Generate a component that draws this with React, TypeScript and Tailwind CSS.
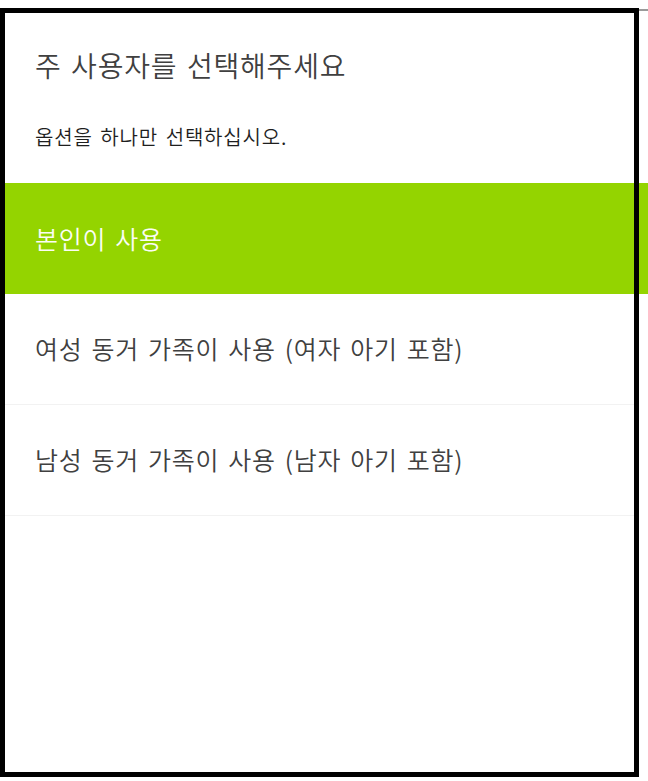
import React from "react";

const font = { fontFamily: '"Noto Sans CJK KR", "Noto Sans", sans-serif' };

export default function App() {
  const items = [
    { label: "본인이 사용", selected: true },
    { label: "여성 동거 가족이 사용 (여자 아기 포함)", selected: false },
    { label: "남성 동거 가족이 사용 (남자 아기 포함)", selected: false },
  ];
  return (
    <div className="w-[648px] h-[781px] bg-white flex" style={font}>
      <div className="mt-[8px] w-[639px] h-[769px] border-[5px] border-black bg-white flex flex-col">
        <div className="pt-[33px] pb-[33px] px-[30px] flex flex-col">
          <div className="text-[28px] leading-[38px] tracking-[0.8px] [word-spacing:2.5px] font-[350] text-[#404040]">
            주 사용자를 선택해주세요
          </div>
          <div className="mt-[40px] text-[20px] leading-[26px] tracking-[0.8px] [word-spacing:2.5px] font-[350] text-[#1e1e1e]">
            옵션을 하나만 선택하십시오.
          </div>
        </div>
        {items.map((it) => (
          <div
            key={it.label}
            className={
              it.selected
                ? "h-[111px] flex items-center px-[30px] bg-[#94d400] text-[25px] tracking-[0.8px] [word-spacing:2.5px] font-[350] text-[#fbfdf5]"
                : "h-[111px] flex items-center px-[30px] border-b border-[#f2f2f2] text-[25px] tracking-[0.8px] [word-spacing:2.5px] font-[350] text-[#404040]"
            }
          >
            {it.label}
          </div>
        ))}
      </div>
      <div className="w-[9px] flex flex-col">
        <div className="mt-[9px] h-[2px] bg-[#9a9a9a]" />
        <div className="mt-[172px] h-[111px] bg-[#94d400]" />
      </div>
    </div>
  );
}
